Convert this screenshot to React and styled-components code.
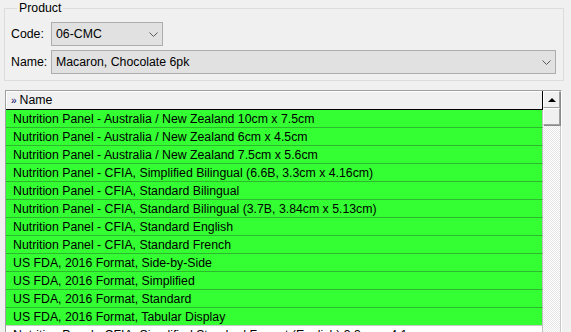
import React from "react";
import styled, { createGlobalStyle } from "styled-components";

const Global = createGlobalStyle`
  html, body { margin: 0; padding: 0; background: #f0f0f0; }
  body { font-family: "Liberation Sans", Arial, sans-serif; font-size: 12.3px; color: #000; }
`;

const Page = styled.div`
  width: 571px;
  height: 332px;
  overflow: hidden;
  background: #f0f0f0;
`;

const Group = styled.fieldset`
  margin: 0 0 0 4px;
  width: 560px;
  box-sizing: border-box;
  border: 1px solid #dcdcdc;
  padding: 6px 7px 6px 6px;
  display: flex;
  flex-direction: column;
  gap: 4px;
  min-inline-size: 0;
`;

const Legend = styled.legend`
  padding: 0 2px;
  margin-left: 6px;
  line-height: 16px;
  font-size: 12.3px;
`;

const FieldRow = styled.div`
  display: flex;
  align-items: center;
  height: 24px;
`;

const Label = styled.span`
  width: 40px;
  flex: none;
`;

const Combo = styled.div`
  box-sizing: border-box;
  height: 24px;
  width: ${(p) => (p.$width ? `${p.$width}px` : "auto")};
  flex: ${(p) => (p.$width ? "none" : "1")};
  background: #e1e1e1;
  border: 1px solid #adadad;
  display: flex;
  align-items: center;
  justify-content: space-between;
  padding: 0 4px 0 4px;
`;

const Chevron = () => (
  <svg width="9" height="5" viewBox="0 0 9 5">
    <polyline points="0.5,0.5 4.5,4.5 8.5,0.5" fill="none" stroke="#5a5a5a" strokeWidth="1" />
  </svg>
);

const Grid = styled.div`
  margin: 9px 0 0 5px;
  width: 557px;
  box-sizing: border-box;
  border-top: 1px solid #a0a0a0;
  border-left: 1px solid #a0a0a0;
  border-right: 1px solid #ffffff;
  display: flex;
  height: 260px;
`;

const Content = styled.div`
  width: 537px;
  flex: none;
  background: #ffffff;
`;

const Header = styled.div`
  box-sizing: border-box;
  height: 19px;
  border-bottom: 1px solid #000;
  border-right: 1px solid #000;
  background: #f0f0f0;
  box-shadow: inset 1px 1px #ffffff;
  display: flex;
  align-items: center;
  padding-left: 5px;
  gap: 3px;
`;

const Mark = styled.span`
  font-size: 10px;
  color: #000060;
  line-height: 1;
  margin-top: 2px;
`;

const Row = styled.div`
  height: 18px;
  box-sizing: border-box;
  border-bottom: 1px solid ${(p) => (p.$last ? "#c8c8c8" : p.$green ? "#2eb82e" : "#e0e0e0")};
  border-right: 1px solid #c0c0c0;
  background: ${(p) => (p.$green ? "#33ff33" : "#ffffff")};
  padding-left: 7px;
  display: flex;
  align-items: center;
  white-space: nowrap;
  overflow: hidden;
`;

const ScrollBar = styled.div`
  width: 17px;
  flex: none;
  display: flex;
  flex-direction: column;
  border-right: 1px solid #c8c8c8;
  background: repeating-conic-gradient(#ffffff 0 25%, #e6e6e6 0 50%) 0 0 / 2px 2px;
`;

const SBButton = styled.div`
  height: 17px;
  box-sizing: border-box;
  background: #f0f0f0;
  border-top: 1px solid #ffffff;
  border-left: 1px solid #ffffff;
  border-right: 1px solid #a0a0a0;
  border-bottom: 1px solid #a0a0a0;
  box-shadow: 1px 1px 0 #8a8a8a;
  display: flex;
  align-items: center;
  justify-content: center;
`;

const Arrow = styled.div`
  width: 0;
  height: 0;
  border-left: 4px solid transparent;
  border-right: 4px solid transparent;
  border-bottom: 4px solid #000;
`;

const rows = [
  "Nutrition Panel - Australia / New Zealand 10cm x 7.5cm",
  "Nutrition Panel - Australia / New Zealand 6cm x 4.5cm",
  "Nutrition Panel - Australia / New Zealand 7.5cm x 5.6cm",
  "Nutrition Panel - CFIA, Simplified Bilingual (6.6B, 3.3cm x 4.16cm)",
  "Nutrition Panel - CFIA, Standard Bilingual",
  "Nutrition Panel - CFIA, Standard Bilingual (3.7B, 3.84cm x 5.13cm)",
  "Nutrition Panel - CFIA, Standard English",
  "Nutrition Panel - CFIA, Standard French",
  "US FDA, 2016 Format, Side-by-Side",
  "US FDA, 2016 Format, Simplified",
  "US FDA, 2016 Format, Standard",
  "US FDA, 2016 Format, Tabular Display",
];

export default function App() {
  return (
    <Page>
      <Global />
      <Group>
        <Legend>Product</Legend>
        <FieldRow>
          <Label>Code:</Label>
          <Combo $width={112}>
            <span>06-CMC</span>
            <Chevron />
          </Combo>
        </FieldRow>
        <FieldRow>
          <Label>Name:</Label>
          <Combo>
            <span>Macaron, Chocolate 6pk</span>
            <Chevron />
          </Combo>
        </FieldRow>
      </Group>
      <Grid>
        <Content>
          <Header>
            <Mark>»</Mark>
            <span>Name</span>
          </Header>
          {rows.map((r, i) => (
            <Row key={r} $green $last={i === rows.length - 1}>
              {r}
            </Row>
          ))}
          <Row>Nutrition Panel - CFIA, Simplified Standard Format (English) 3.3cm x 4.1cm</Row>
        </Content>
        <ScrollBar>
          <SBButton>
            <Arrow />
          </SBButton>
          <SBButton />
        </ScrollBar>
      </Grid>
    </Page>
  );
}
